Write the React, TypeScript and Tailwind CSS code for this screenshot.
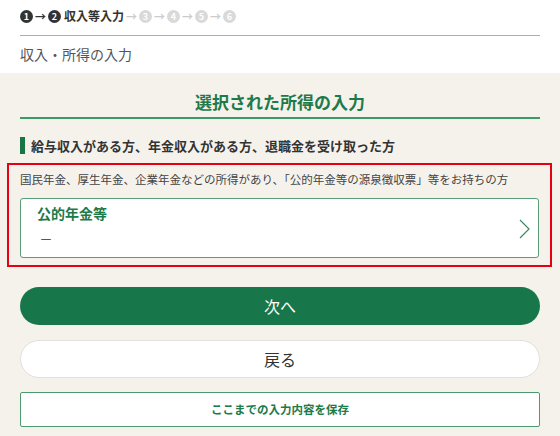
const font = { fontFamily: '"Noto Sans CJK JP", "Noto Sans", sans-serif' }

const Step = ({ n, active }: { n: number; active: boolean }) => (
  <span
    className={`inline-flex items-center justify-center w-[13px] h-[13px] rounded-full text-[9px] font-bold leading-none text-white ${active ? 'bg-[#333]' : 'bg-[#d9d9d9]'}`}
  >
    {n}
  </span>
)

const Arrow = ({ active }: { active: boolean }) => (
  <span className={`inline-block w-[15px] text-center text-[11px] font-bold leading-none ${active ? 'text-[#333]' : 'text-[#ccc]'}`}>→</span>
)

export default function App() {
  return (
    <div className="w-[560px] h-[436px] overflow-hidden bg-[#f5f2ec]" style={font}>
      <div className="bg-white px-5">
        <div className="flex items-center h-[35px] pb-[3px]">
          <Step n={1} active />
          <Arrow active />
          <Step n={2} active />
          <span className="ml-[3px] text-[12px] font-bold text-[#333]">収入等入力</span>
          {[3, 4, 5, 6].map((n) => (
            <span key={n} className="inline-flex items-center">
              <Arrow active={false} />
              <Step n={n} active={false} />
            </span>
          ))}
        </div>
        <div className="border-t border-[#94bca9]" />
        <div className="h-[37px] flex items-center text-[14px] text-[#555]">収入・所得の入力</div>
      </div>

      <div className="px-5">
        <h1 className="pt-[19px] pb-[5px] leading-[20px] text-center text-[17px] font-bold text-[#1d7a4a] border-b-2 border-[#3a9a68]">
          選択された所得の入力
        </h1>
        <div className="mt-[18px] flex items-center gap-[6px]">
          <span className="w-[5px] h-[17px] bg-[#1a7545]" />
          <span className="text-[13px] leading-[17px] font-bold text-[#333]">
            給与収入がある方、年金収入がある方、退職金を受け取った方
          </span>
        </div>
      </div>

      <div className="ml-[7px] mr-[8px] mt-[9px] border-2 border-[#e60012] px-[11px] pt-[4px] pb-[7px]">
        <p className="text-[11.5px] text-[#444] leading-[20px] whitespace-nowrap">
          国民年金、厚生年金、企業年金などの所得があり、「公的年金等の源泉徴収票」等をお持ちの方
        </p>
        <div className="mt-[9px] h-[60px] bg-white border border-[#5a9c78] rounded-[3px] flex items-center pl-[16px] pr-[8px]">
          <div className="flex-1 self-start pt-[5px]">
            <div className="text-[14px] font-bold text-[#1d7a4a] leading-[18px]">公的年金等</div>
            <div className="mt-[9px] pl-[3px] text-[12px] text-[#555] leading-[18px]">ー</div>
          </div>
          <svg width="11" height="20" viewBox="0 0 11 20" fill="none" className="mt-[2px]">
            <polyline points="1,1 10,10 1,19" stroke="#3c8a60" strokeWidth="1.2" />
          </svg>
        </div>
      </div>

      <div className="px-5 mt-[20px] flex flex-col">
        <button className="h-[38px] rounded-full bg-[#18774a] text-white text-[16px]">次へ</button>
        <button className="mt-[15px] h-[38px] rounded-full bg-white border border-[#e3e0da] text-[#333] text-[16px]">
          戻る
        </button>
        <button className="mt-[14px] h-[35px] rounded-[2px] bg-white border border-[#4d9a72] text-[#1d7a4a] text-[11.5px] font-bold">
          ここまでの入力内容を保存
        </button>
      </div>
    </div>
  )
}
